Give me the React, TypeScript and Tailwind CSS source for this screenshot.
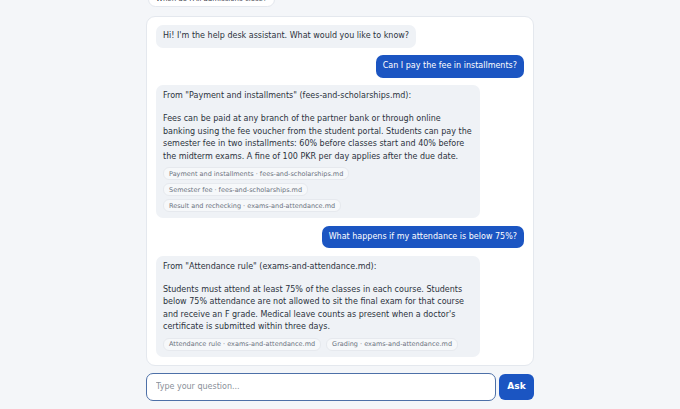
import React from 'react';

type Msg = {
  role: 'user' | 'bot';
  text: string;
  source?: string;
  sources?: string[];
};

const messages: Msg[] = [
  { role: 'bot', text: "Hi! I'm the help desk assistant. What would you like to know?" },
  { role: 'user', text: 'Can I pay the fee in installments?' },
  {
    role: 'bot',
    source: 'From "Payment and installments" (fees-and-scholarships.md):',
    text:
      'Fees can be paid at any branch of the partner bank or through online banking using the fee voucher from the student portal. Students can pay the semester fee in two installments: 60% before classes start and 40% before the midterm exams. A fine of 100 PKR per day applies after the due date.',
    sources: [
      'Payment and installments · fees-and-scholarships.md',
      'Semester fee · fees-and-scholarships.md',
      'Result and rechecking · exams-and-attendance.md',
    ],
  },
  { role: 'user', text: 'What happens if my attendance is below 75%?' },
  {
    role: 'bot',
    source: 'From "Attendance rule" (exams-and-attendance.md):',
    text:
      "Students must attend at least 75% of the classes in each course. Students below 75% attendance are not allowed to sit the final exam for that course and receive an F grade. Medical leave counts as present when a doctor's certificate is submitted within three days.",
    sources: ['Attendance rule · exams-and-attendance.md', 'Grading · exams-and-attendance.md'],
  },
];

const App = () => {
  return (
    <div className="min-h-screen overflow-hidden bg-[#f4f6f9] font-['DejaVu_Sans',sans-serif] text-[#2c333d]">
      <div className="mx-auto flex w-[388px] flex-col">
        {/* Suggested question (scrolled partly out of view) */}
        <div className="-mt-[8px] flex">
          <span className="ml-[2px] rounded-full border border-[#e3e7ed] bg-white px-[7px] py-[2px] text-[7px] leading-[9px] text-[#3a414b]">
            When do FAll admissions close?
          </span>
        </div>

        {/* Chat panel */}
        <div className="mt-[9px] flex flex-col gap-[7.5px] rounded-[9px] border border-[#e4e8ee] bg-white px-[9px] py-[8px]">
          {messages.map((m, i) =>
            m.role === 'user' ? (
              <div key={i} className="flex justify-end">
                <div className="rounded-[7px] bg-[#1b55c2] px-[7px] py-[5px] text-[8px] leading-[12.5px] text-white">
                  {m.text}
                </div>
              </div>
            ) : (
              <div key={i} className="flex justify-start">
                <div className="max-w-[88%] rounded-[7px] bg-[#eff2f6] px-[7px] pt-[5px] pb-[5px] text-[8px] leading-[12.5px]">
                  {m.source && <div>{m.source}</div>}
                  <div className={m.source ? 'mt-[10.5px]' : ''}>{m.text}</div>
                  {m.sources && (
                    <div className="mt-[4px] mb-[1px] flex flex-wrap gap-x-[5px] gap-y-[3px]">
                      {m.sources.map((s) => (
                        <span
                          key={s}
                          className="rounded-[6px] border border-[#e6e9ee] bg-[#f6f8fa] px-[5px] py-[1.5px] text-[6.5px] leading-[8px] text-[#6b7280]"
                        >
                          {s}
                        </span>
                      ))}
                    </div>
                  )}
                </div>
              </div>
            )
          )}
        </div>

        {/* Input row */}
        <div className="mt-[7px] flex items-center gap-[3px]">
          <input
            className="h-[28px] flex-1 rounded-[7px] border-[1.5px] border-[#4d70a8] bg-white px-[9px] text-[8px] text-[#2c333d] outline-none placeholder:text-[#8a9099]"
            placeholder="Type your question..."
          />
          <button className="h-[26px] w-[35px] rounded-[6px] bg-[#1b55c2] text-[9px] font-bold text-white">
            Ask
          </button>
        </div>
      </div>
    </div>
  );
};

export default App;
